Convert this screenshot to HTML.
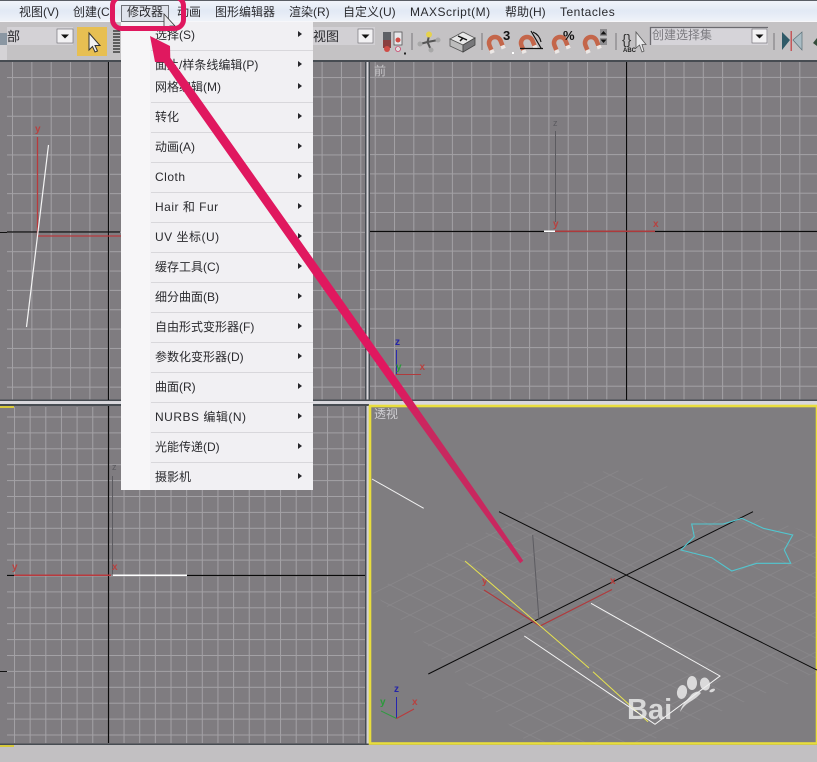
<!DOCTYPE html>
<html lang="zh"><head><meta charset="utf-8"><title>3ds Max 修改器菜单</title>
<style>
html,body{margin:0;padding:0;background:#c2c0c2;width:817px;height:762px;overflow:hidden}
svg{display:block}
text{font-family:"Liberation Sans","Noto Sans CJK SC",sans-serif;font-size:12px;fill:#2a2a2e}
.w{letter-spacing:.5px}
.l{font-size:10px;font-weight:bold;fill:#b8413f}
</style></head><body>
<svg xmlns="http://www.w3.org/2000/svg" width="817" height="762" viewBox="0 0 817 762">
<defs>
<linearGradient id="mb" x1="0" y1="0" x2="0" y2="1"><stop offset="0" stop-color="#f2f5fb"/><stop offset=".5" stop-color="#e2e9f5"/><stop offset="1" stop-color="#f0f3f9"/></linearGradient>
<linearGradient id="ar" gradientUnits="userSpaceOnUse" x1="0" y1="380" x2="0" y2="430"><stop offset="0" stop-color="#e0185f"/><stop offset="1" stop-color="#c8285f"/></linearGradient>
<pattern id="g1" patternUnits="userSpaceOnUse" width="19.35" height="19.35" x="12" y="19"><path d="M.5 0V19.35M0 .5H19.35" stroke="#a3a1a5" stroke-width="1" fill="none"/></pattern>
<pattern id="g2" patternUnits="userSpaceOnUse" width="19.3" height="19.3" x="8" y="19"><path d="M.5 0V19.3M0 .5H19.3" stroke="#a3a1a5" stroke-width="1" fill="none"/></pattern>
<pattern id="g3" patternUnits="userSpaceOnUse" width="15.65" height="15.9" x="14" y="19"><path d="M.5 0V15.9M0 .5H15.65" stroke="#a3a1a5" stroke-width="1" fill="none"/></pattern>
<clipPath id="pc"><polygon points="372,592 610,468 817,535 817,672 640,745 530,745"/></clipPath>
<g id="mag"><path d="M-6 7V0a6 6 0 0 1 12 0V7" fill="none" stroke="#c4664a" stroke-width="4.5"/><path d="M-8.2 5H-3.8V8.5H-8.2ZM3.8 5H8.2V8.5H3.8Z" fill="#ece8e6"/></g>
<polygon id="tr" points="0,0 4,3 0,6" fill="#26262a"/>
<path id="dd" d="M-4 -1.500H4L0 2.500Z" fill="#111"/>
</defs>

<!-- background -->
<rect width="817" height="762" fill="#c2c0c2"/>
<!-- menu bar -->
<rect width="817" height="22" fill="url(#mb)"/>
<rect width="817" height="1" fill="#5a5e66"/>
<rect y="21" width="817" height="1" fill="#f7f7fa"/>
<g>
<text x="19" y="16">视图(V)</text>
<text x="73" y="16">创建(C)</text>
<rect x="121.500" y="5.500" width="47" height="16" fill="#dfe3ec" stroke="#6f7278"/>
<text x="127" y="16">修改器</text>
<text x="177" y="16">动画</text>
<text x="215" y="16">图形编辑器</text>
<text x="289" y="16">渲染(R)</text>
<text x="343" y="16">自定义(U)</text>
<text x="410" y="16" class="w">MAXScript(M)</text>
<text x="505" y="16">帮助(H)</text>
<text x="560" y="16" class="w">Tentacles</text>
</g>

<!-- toolbar -->
<rect y="22" width="817" height="38" fill="#c4c2c4"/>
<rect y="33" width="7" height="12" fill="#8b97a3"/>
<rect y="45" width="7" height="16" fill="#d5d3d6"/>
<rect x="7" y="27" width="66" height="18" fill="#d4d2d6"/>
<text x="7" y="41" style="font-size:13px">部</text>
<rect x="57" y="29" width="16" height="14" fill="#f2f1f3" stroke="#66656a" stroke-width=".6"/>
<use href="#dd" x="65" y="36"/>
<rect x="77" y="27" width="30" height="29" fill="#e7bf52"/>
<path d="M89 33V50L92.500 46.500L95 52L97.500 51L95 45.500H100Z" fill="#f2f2f2" stroke="#333" stroke-width="1"/>
<path d="M113 31H120M113 34H120M113 37H120M113 40H120M113 43H120M113 46H120M113 49H120M113 52H120" stroke="#222" stroke-width="1.300"/>

<rect x="312" y="27" width="63" height="18" fill="#d2d0d4"/>
<text x="313" y="41" style="font-size:13px">视图</text>
<rect x="358" y="29" width="15" height="14" fill="#f2f1f3" stroke="#66656a" stroke-width=".6"/>
<use href="#dd" x="365.500" y="36"/>
<rect x="383" y="32" width="8" height="16" fill="#5e6065"/><rect x="383" y="40" width="8" height="8" fill="#8a3f3f"/><circle cx="387" cy="49" r="3" fill="#cf4c46"/>
<rect x="394" y="32" width="8" height="13" fill="#e7e7ea" stroke="#555" stroke-width=".8"/><circle cx="398" cy="40" r="2.500" fill="#cf4c46"/><circle cx="398" cy="49" r="2.500" fill="#e0dede" stroke="#c25" stroke-width=".6"/>
<rect x="404" y="52.500" width="2" height="2" fill="#222"/>
<rect x="411.500" y="33" width="1" height="17" fill="#77767a"/>

<path d="M429 36L427.500 42M420 44L427.500 42M431 50L427.500 42M438 40L427.500 42" stroke="#555" stroke-width="2"/>
<circle cx="429" cy="34.500" r="3" fill="#e6d24c"/><circle cx="420" cy="44" r="2.500" fill="#a8a8a8"/><circle cx="431" cy="50" r="2.500" fill="#a8a8a8"/><circle cx="438" cy="40" r="2.500" fill="#a8a8a8"/>
<polygon points="450,39 463,32 475,38 463,45" fill="#e8e8e8" stroke="#555" stroke-width=".8"/>
<polygon points="450,39 463,45 463,52 450,46" fill="#bdbdbd" stroke="#555" stroke-width=".8"/>
<polygon points="463,45 475,38 475,45 463,52" fill="#77777a" stroke="#444" stroke-width=".8"/>
<path d="M458 36L467 40M463 38L460 41" stroke="#111" stroke-width="1.500"/>
<rect x="481.500" y="33" width="1" height="17" fill="#77767a"/>

<use href="#mag" transform="translate(495 43) rotate(-22)"/>
<text x="503" y="40" style="font-size:13px;font-weight:bold;fill:#111">3</text>
<rect x="512" y="52" width="2" height="2" fill="#fff"/>
<use href="#mag" transform="translate(527 43) rotate(-22)"/>
<path d="M520 48.500H543M531 31L541 48M533 32A14 14 0 0 1 541 42" fill="none" stroke="#111" stroke-width="1.200"/>
<use href="#mag" transform="translate(560 43) rotate(-22)"/>
<text x="563" y="40" style="font-size:13px;font-weight:bold;fill:#111">%</text>
<use href="#mag" transform="translate(591 43) rotate(-22)"/>
<rect x="600" y="29" width="7" height="16" fill="#8e8d90"/><path d="M600.500 34.500L603.500 31L606.500 34.500ZM600.500 39.500L603.500 43L606.500 39.500Z" fill="#111"/><rect x="600" y="36.500" width="7" height="1" fill="#eee"/>
<rect x="615.500" y="33" width="1" height="17" fill="#77767a"/>
<text x="622" y="44" style="font-size:14px;fill:#333">{}</text>
<text x="623" y="52" style="font-size:6px;font-weight:bold;fill:#222">ABC</text>
<path d="M636 32V48L639.500 45L642 52L644 51L642 44.500H646Z" fill="#e8e8ea" stroke="#555" stroke-width=".8"/>
<rect x="650" y="27" width="118" height="18" fill="#d6d4d9"/>
<path d="M650.500 45V27.500H768" fill="none" stroke="#6c6b70" stroke-width="1.300"/>
<text x="652" y="39" style="font-size:12px;fill:#7c7b80">创建选择集</text>
<rect x="752" y="29" width="15" height="14" fill="#f2f1f3" stroke="#66656a" stroke-width=".6"/>
<use href="#dd" x="759.500" y="36"/>
<rect x="773.500" y="33" width="1" height="17" fill="#77767a"/>
<polygon points="782,32 790,40 782,50" fill="#2f5a68"/>
<polygon points="802,32 793,40 802,50" fill="#a9bcc4" stroke="#5b7078" stroke-width=".7"/>
<rect x="790.500" y="31" width="1.500" height="20" fill="#c5575a"/>
<polygon points="817,38 813,43 817,46" fill="#334c3a"/>
<rect y="60" width="817" height="2" fill="#474c52"/>

<!-- viewports -->
<rect x="0" y="62" width="365" height="338" fill="#7f7c80"/>
<rect x="7" y="62" width="358" height="338" fill="url(#g1)"/>
<rect x="370" y="62" width="447" height="338" fill="#7f7c80"/>
<rect x="370" y="62" width="447" height="338" fill="url(#g2)"/>
<rect x="0" y="406" width="365" height="338" fill="#7f7c80"/>
<rect x="7" y="407" width="358" height="336" fill="url(#g3)"/>
<rect x="365" y="62" width="5" height="338" fill="#d8d7dc"/>
<rect x="365" y="62" width="1.500" height="338" fill="#474c52"/>
<rect x="368.500" y="62" width="1.500" height="338" fill="#474c52"/>
<rect x="0" y="399.500" width="817" height="6.500" fill="#d8d7dc"/>
<rect x="0" y="399.500" width="817" height="1.500" fill="#474c52"/>
<rect x="0" y="404" width="369" height="2" fill="#474c52"/>
<rect x="365" y="406" width="4" height="339" fill="#d2d1d5"/>
<rect x="365" y="406" width="1.500" height="339" fill="#474c52"/>
<rect x="0" y="406" width="14" height="2" fill="#d8c93a"/>
<rect x="0" y="743.500" width="369" height="1.500" fill="#474c52"/>
<rect x="0" y="745" width="14" height="2" fill="#d8c93a"/>

<!-- top-left content -->
<path d="M7 232H120M108.500 62V400" stroke="#0c0c0c" stroke-width="1.200" fill="none"/>
<path d="M37.500 137V236H121" stroke="#b83a3c" stroke-width="1.300" fill="none"/>
<path d="M48.500 145L26.500 327" stroke="#f4f4f4" stroke-width="1.200"/>
<text x="35" y="132" class="l">y</text>
<rect x="0" y="232" width="7" height="1" fill="#111"/>
<text x="374" y="75" style="font-size:12px;fill:#c6c5c8">前</text>

<!-- front -->
<path d="M370 231.500H817M626.500 62V400" stroke="#0a0a0a" stroke-width="1.200" fill="none"/>
<rect x="544" y="230.500" width="11" height="1.500" fill="#fff"/>
<rect x="555" y="230.500" width="100" height="1.500" fill="#ad3a3c"/>
<path d="M555.500 131V222" stroke="#5c5b60"/>
<text x="553" y="126" style="font-size:9px;fill:#5c5b60">z</text>
<text x="553" y="227" class="l">y</text>
<text x="653" y="227" class="l">x</text>
<path d="M396.500 350V374" stroke="#2b2bb0"/><path d="M396 374.500H421" stroke="#b03a3c"/>
<text x="395" y="345" class="l" style="fill:#2525a8">z</text>
<text x="419.500" y="370" class="l">x</text>
<text x="396" y="370" class="l" style="fill:#2a9a3a">y</text>

<!-- bottom-left -->
<path d="M7 575.500H14M187 575.500H365M108.500 406V743" stroke="#0a0a0a" stroke-width="1.200" fill="none"/>
<rect x="14" y="574.500" width="97" height="1.500" fill="#b93a3e"/>
<rect x="113" y="574.500" width="74" height="1.500" fill="#fff"/>
<path d="M112.500 476V574" stroke="#5c5b60"/>
<text x="12" y="570" class="l">y</text><text x="112" y="570" class="l">x</text>
<text x="112" y="470" style="font-size:9px;fill:#5c5b60">z</text>
<rect x="0" y="671" width="7" height="1" fill="#111"/>

<!-- perspective -->
<rect x="369" y="405" width="448" height="340" fill="#7f7d80"/>
<g clip-path="url(#pc)" stroke="#9a989b" stroke-width=".8" opacity=".38" fill="none">
<path d="M372 316L817 538.500M372 336L817 558.500M372 356L817 578.500M372 376L817 598.500M372 396L817 618.500M372 416L817 638.500M372 436L817 658.500M372 456L817 678.500M372 476L817 698.500M372 496L817 718.500M372 516L817 738.500M372 536L790 745M372 556L750 745M372 576L710 745M372 596L670 745M372 616L630 745M372 636L590 745M372 656L550 745"/>
<path d="M372 594L817 371.500M372 614L817 391.500M372 634L817 411.500M372 654L817 431.500M372 674L817 451.500M372 694L817 471.500M372 714L817 491.500M372 734L817 511.500M390 745L817 531.500M430 745L817 551.500M470 745L817 571.500M510 745L817 591.500M550 745L817 611.500M590 745L817 631.500M630 745L817 651.500M670 745L817 671.500"/>
</g>
<rect x="370" y="406" width="447" height="337.500" fill="none" stroke="#e8dd3c" stroke-width="2.600"/>
<text x="374" y="418" style="font-size:12px;fill:#cfced2">透视</text>
<path d="M372 479L423.700 508.300" stroke="#f2f2f2" stroke-width="1"/>
<path d="M499 511.700L817 670M428.300 674L753 511.700" stroke="#0a0a0a" stroke-width="1"/>
<path d="M532.700 535L539 620" stroke="#5c5b60" stroke-width="1"/>
<path d="M484 590L540 626L612 589.500" stroke="#b03a3c" fill="none" stroke-width="1.200"/>
<text x="482" y="584" class="l">y</text><text x="610" y="584" class="l">x</text>
<path d="M465 561L589 668M593 671.700L648 721.700" stroke="#e6e250" stroke-width="1"/>
<path d="M591 603.300L720 676L655 724.300L524.300 636" fill="none" stroke="#f6f6f6" stroke-width="1"/>
<polygon points="691.700,524 723.300,524 741.700,518.300 763.300,528.300 792.700,535 784.300,550 790.700,563.300 756.700,563.300 731.700,571 711.700,557.700 681,550 694.300,536.700" fill="none" stroke="#52c6cf" stroke-width="1.100"/>
<path d="M396.500 697V718.500" stroke="#2525b0" stroke-width="1"/><path d="M396.500 718.500L381 711" stroke="#2f9a40"/><path d="M396.500 718.500L414 709" stroke="#b93a3c"/>
<text x="394" y="692" class="l" style="fill:#2525a8">z</text>
<text x="380" y="705" class="l" style="fill:#2a9a3a">y</text>
<text x="412" y="705" class="l">x</text>

<!-- watermark -->
<g fill="#eeeeee" opacity=".82">
<text x="627" y="719" style="font-size:29px;font-weight:bold;fill:#ececec">Bai</text>
<ellipse cx="682" cy="692" rx="5" ry="7" transform="rotate(10 682 692)"/>
<ellipse cx="692" cy="683" rx="5" ry="7"/>
<ellipse cx="705" cy="684" rx="5" ry="6.500" transform="rotate(-12 705 684)"/>
<ellipse cx="712" cy="690.500" rx="3" ry="1.500" transform="rotate(-25 712 690)"/>
<path d="M680 712C688 700 692 703 701 693C699 691 696 691 692 694C687 700 682 704 680 712Z"/>
</g>

<!-- menu -->
<rect x="121" y="22" width="192" height="468" fill="#f1f0f3"/>
<rect x="121" y="22" width="29" height="468" fill="#f7f6f8"/>
<g fill="#d8d7db">
<rect x="151" y="50" width="162" height="1"/><rect x="151" y="102" width="162" height="1"/><rect x="151" y="132" width="162" height="1"/><rect x="151" y="162" width="162" height="1"/><rect x="151" y="192" width="162" height="1"/><rect x="151" y="222" width="162" height="1"/><rect x="151" y="252" width="162" height="1"/><rect x="151" y="282" width="162" height="1"/><rect x="151" y="312" width="162" height="1"/><rect x="151" y="342" width="162" height="1"/><rect x="151" y="372" width="162" height="1"/><rect x="151" y="402" width="162" height="1"/><rect x="151" y="432" width="162" height="1"/><rect x="151" y="462" width="162" height="1"/>
</g>
<text x="155" y="39">选择(S)</text>
<text x="155" y="69">面片/样条线编辑(P)</text>
<text x="155" y="91">网格编辑(M)</text>
<text x="155" y="121">转化</text>
<text x="155" y="151">动画(A)</text>
<text x="155" y="181" class="w">Cloth</text>
<text x="155" y="211" class="w">Hair 和 Fur</text>
<text x="155" y="241" class="w">UV 坐标(U)</text>
<text x="155" y="271">缓存工具(C)</text>
<text x="155" y="301">细分曲面(B)</text>
<text x="155" y="331">自由形式变形器(F)</text>
<text x="155" y="361">参数化变形器(D)</text>
<text x="155" y="391">曲面(R)</text>
<text x="155" y="421" class="w">NURBS 编辑(N)</text>
<text x="155" y="451">光能传递(D)</text>
<text x="155" y="481">摄影机</text>
<use href="#tr" x="298" y="31"/><use href="#tr" x="298" y="61"/><use href="#tr" x="298" y="83"/><use href="#tr" x="298" y="113"/><use href="#tr" x="298" y="143"/><use href="#tr" x="298" y="173"/><use href="#tr" x="298" y="203"/><use href="#tr" x="298" y="233"/><use href="#tr" x="298" y="263"/><use href="#tr" x="298" y="293"/><use href="#tr" x="298" y="323"/><use href="#tr" x="298" y="353"/><use href="#tr" x="298" y="383"/><use href="#tr" x="298" y="413"/><use href="#tr" x="298" y="443"/><use href="#tr" x="298" y="473"/>

<!-- cursor -->
<path d="M164 14V30L167.500 27L170 33L172 32L170 26H175Z" fill="#e9e9ec" stroke="#333" stroke-width=".8"/>

<!-- annotation -->
<rect x="112.500" y="-3" width="71" height="31.500" rx="9" fill="none" stroke="#e0185f" stroke-width="5"/>
<polygon points="150,36 170,46 170.300,57.700 198.900,97.400 340.300,297.400 410.500,397.700 480.400,498.300 523.300,560.800 520.100,563.200 475.400,501.700 403.900,402.300 332.900,302.600 191.500,102.600 163.700,62.300 155,62" fill="url(#ar)"/>
</svg>
</body></html>
